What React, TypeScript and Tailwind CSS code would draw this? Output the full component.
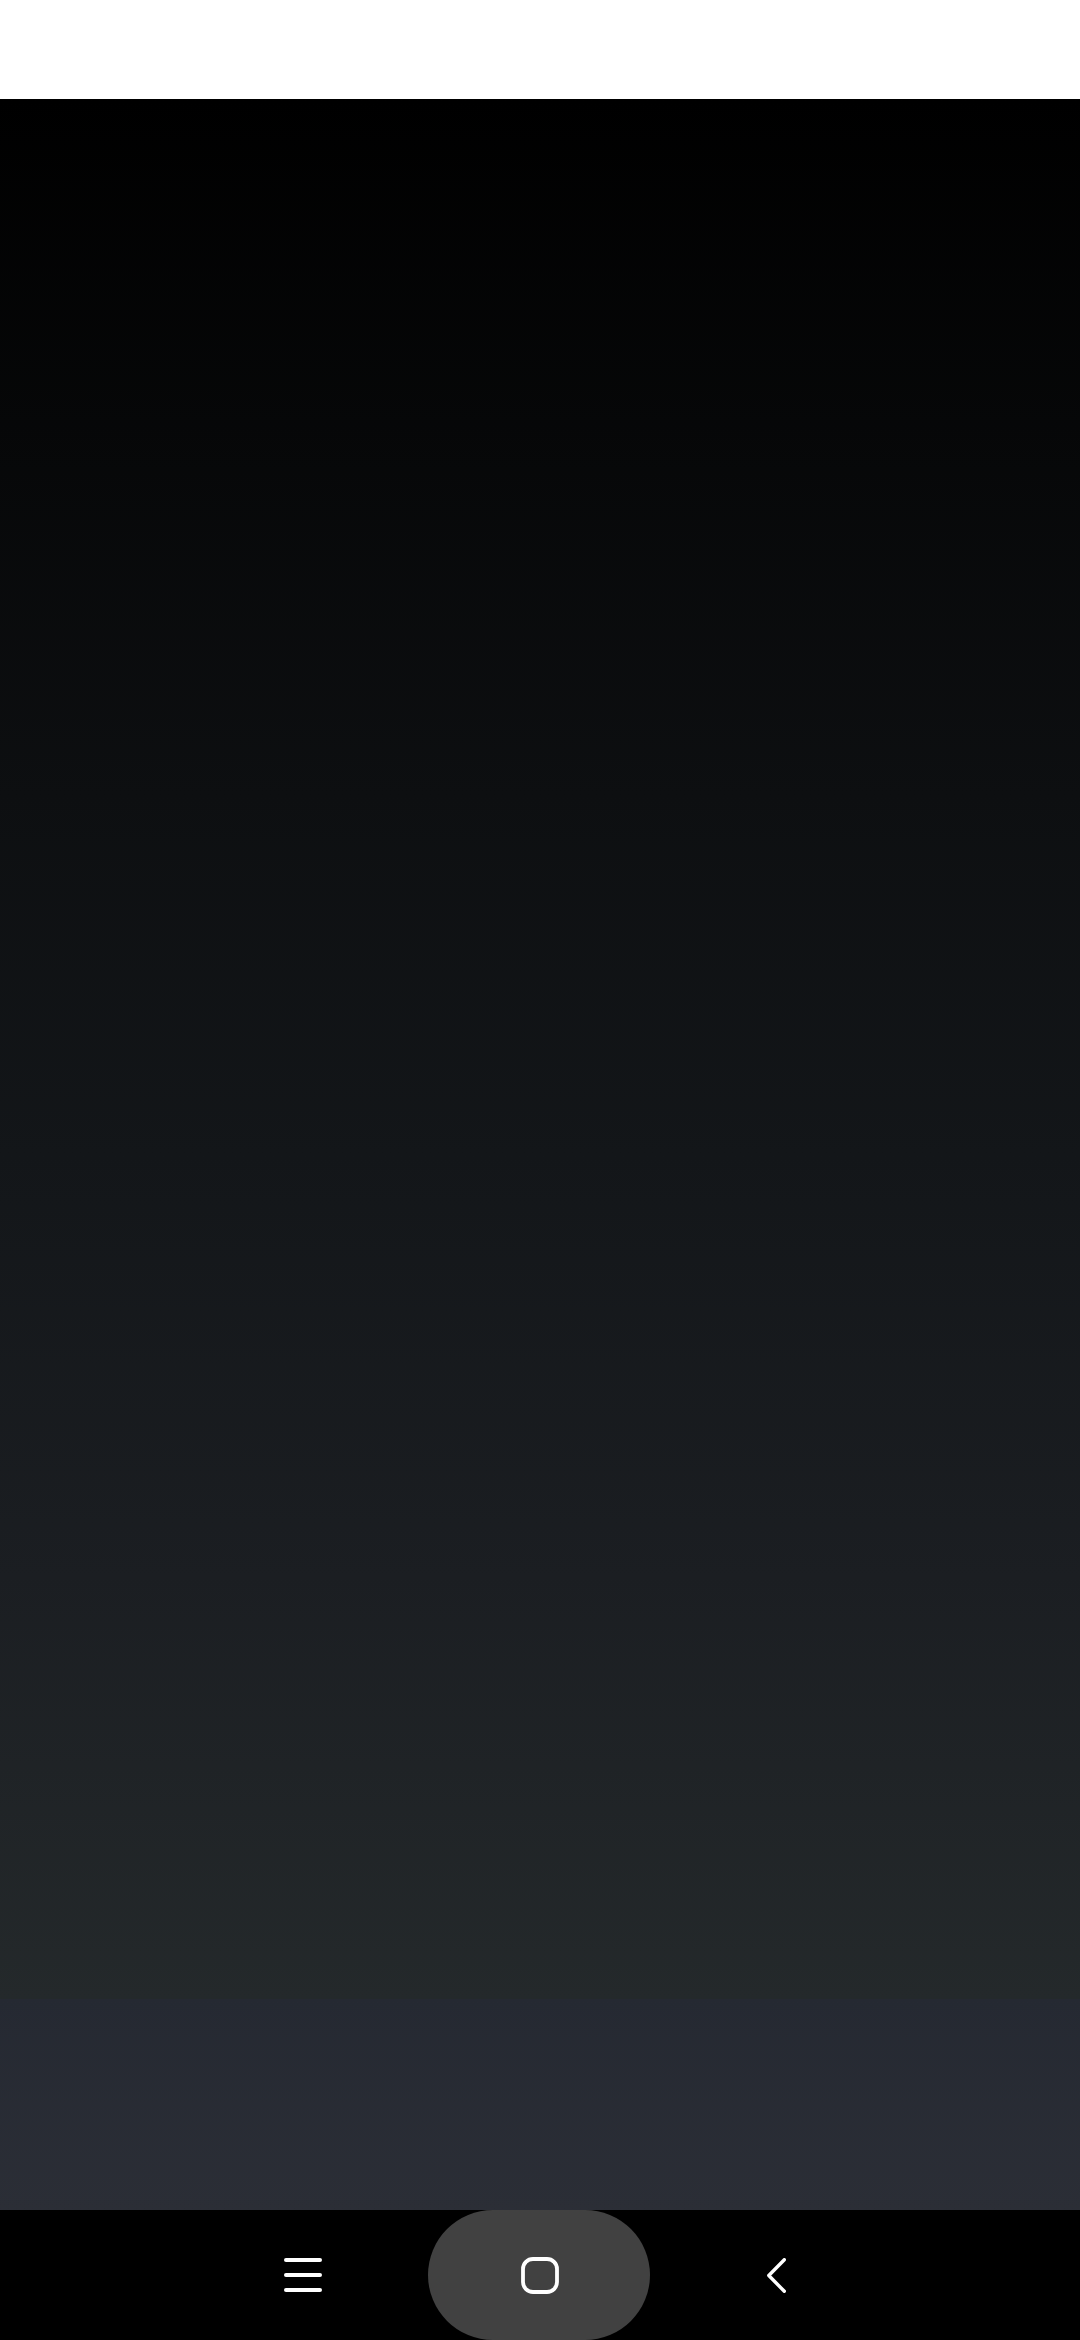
export default function App() {
  return (
    <div className="flex h-[2340px] w-[1080px] flex-col bg-white">
      <div className="h-[99px] shrink-0 bg-white" />
      <main className="flex-1 bg-[linear-gradient(to_bottom,#000000_0%,#0d0f11_33%,#131619_50%,#1b1e22_70%,#24292b_90%,#252932_90%,#2b2e36_100%)]" />
      <nav className="flex h-[130px] shrink-0 items-center bg-black pl-[284px]">
        <button aria-label="Menu" className="flex w-[38px] shrink-0 flex-col gap-[11px]">
          <span className="h-[4px] w-[38px] rounded-full bg-white" />
          <span className="h-[4px] w-[38px] rounded-full bg-white" />
          <span className="h-[4px] w-[38px] rounded-full bg-white" />
        </button>
        <button aria-label="Home" className="ml-[106px] flex h-[130px] w-[222px] shrink-0 items-center justify-center rounded-[65px] bg-[#414141] pl-[2px]">
          <svg width="38" height="37" viewBox="0 0 38 37" fill="none">
            <rect x="2" y="2" width="34" height="33" rx="10" stroke="white" strokeWidth="3.8" />
          </svg>
        </button>
        <button aria-label="Back" className="ml-[117px] flex w-[19px] shrink-0 items-center justify-center">
          <svg width="19" height="35" viewBox="0 0 19 35" fill="none">
            <path d="M17.3 1.7 L1.8 17.5 L17.3 33.3" stroke="white" strokeWidth="3.4" strokeLinecap="round" strokeLinejoin="round" />
          </svg>
        </button>
      </nav>
    </div>
  );
}
